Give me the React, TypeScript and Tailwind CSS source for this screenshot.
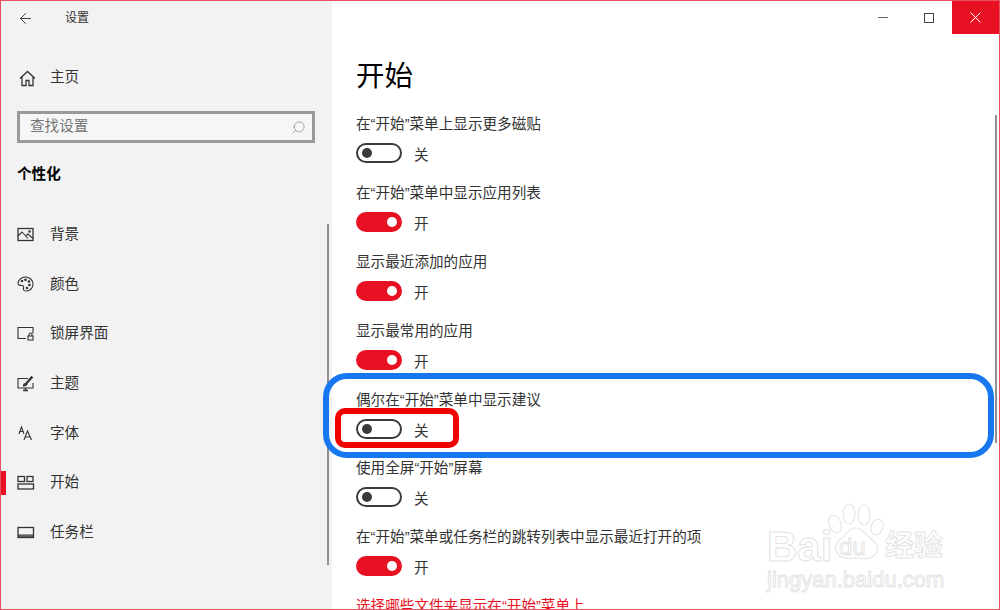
import React from "react";
import { ArrowLeft, Search } from "lucide-react";

const font = "font-['Liberation_Sans','Noto_Sans_CJK_SC',sans-serif]";

const navIcons: Record<string, React.ReactNode> = {
  背景: (
    <>
      <rect x="1" y="2.500" width="15" height="12" strokeWidth="1.300" />
      <path d="M1 10l4-4 6 6.500M9 9.500l2-1.500 5 4.500" />
      <circle cx="12.500" cy="5.500" r="0.800" />
    </>
  ),
  颜色: (
    <>
      <path d="M8.500 1C4.500 1 1 4 1 7.500c0 2 2.500 2 4 2 1.500 0 2 1 1.500 2.500-.5 2 .5 3 2.500 3 4 0 7-3 7-7S12.500 1 8.500 1z" />
      <circle cx="5" cy="5" r="0.800" fill="#333" />
      <circle cx="8.500" cy="3.800" r="0.800" fill="#333" />
      <circle cx="12" cy="5.500" r="0.800" fill="#333" />
      <circle cx="12.500" cy="9" r="0.800" fill="#333" />
      <circle cx="10" cy="12" r="0.800" fill="#333" />
    </>
  ),
  锁屏界面: (
    <>
      <path d="M9 13.500H1V2.500h15v6" />
      <rect x="11" y="11" width="5" height="4" />
      <path d="M12 11V9.500a1.500 1.500 0 0 1 3 0V11" />
    </>
  ),
  主题: (
    <>
      <path d="M11 3.500H1v9.500h15V8" />
      <path d="M6 15.500h5M8.500 13v2.500" strokeWidth="1.500" />
      <path d="M6.500 11c0-2 1-2.500 2-2.500L14.500 1.500l1 1-5.500 6c0 1.500-1 2.500-3.500 2.500z" fill="#333" />
    </>
  ),
  字体: (
    <>
      <path d="M2 9l2.500-7L7 9M3 6.500h3" />
      <path d="M7 15l3.500-9L14.500 15M8.300 12h4.500" />
    </>
  ),
  开始: (
    <>
      <rect x="1" y="2.500" width="6.500" height="5" strokeWidth="1.300" />
      <rect x="10" y="2.500" width="6" height="5" strokeWidth="1.300" />
      <rect x="1" y="10" width="15.500" height="5" strokeWidth="1.300" />
    </>
  ),
  任务栏: (
    <>
      <rect x="1" y="3.500" width="15.500" height="10" strokeWidth="1.300" />
      <path d="M1 11h15.500M1 12.300h15.500" />
    </>
  ),
};

const navItems = ["背景", "颜色", "锁屏界面", "主题", "字体", "开始", "任务栏"];

const settings = [
  { label: "在“开始”菜单上显示更多磁贴", on: false },
  { label: "在“开始”菜单中显示应用列表", on: true },
  { label: "显示最近添加的应用", on: true },
  { label: "显示最常用的应用", on: true },
  { label: "偶尔在“开始”菜单中显示建议", on: false },
  { label: "使用全屏“开始”屏幕", on: false },
  { label: "在“开始”菜单或任务栏的跳转列表中显示最近打开的项", on: true },
];

function Toggle({ on }: { on: boolean }) {
  return (
    <div className="flex items-center h-[20px] mt-[8px]">
      <div
        className={`w-[46px] h-[20px] rounded-full flex items-center ${
          on
            ? "bg-[#e81123] justify-end pr-[5px]"
            : "border-2 border-[#3a3a3a] pl-[4px]"
        }`}
      >
        <div className={`w-[10px] h-[10px] rounded-full ${on ? "bg-white" : "bg-[#3a3a3a]"}`}></div>
      </div>
      <span className="ml-[12px] text-[14.600px] leading-[20px] text-[#333] mt-[4px]">{on ? "开" : "关"}</span>
    </div>
  );
}

function BaiduMark() {
  const outline = "text-white [-webkit-text-stroke:1px_#e4e4e4] whitespace-nowrap";
  return (
    <div className="absolute left-[766px] top-[502px] w-[180px] h-[90px] pointer-events-none">
      <svg className="absolute left-[60px] top-0" width="60" height="60" viewBox="0 0 60 60" fill="#fff" stroke="#e6e6e6" strokeWidth="1.200">
        <ellipse cx="8" cy="21" rx="6" ry="9" transform="rotate(-20 8 21)" />
        <ellipse cx="22" cy="11" rx="6" ry="10" />
        <ellipse cx="37" cy="12" rx="6" ry="10" />
        <ellipse cx="50" cy="24" rx="6" ry="8" transform="rotate(20 50 24)" />
        <path d="M28 25c-6 0-8 6-13 10-6 4-7 8-6 12 2 8 9 9 19 8 8 1 18 2 22-6 2-6-1-9-6-13-5-4-8-11-16-11z" />
      </svg>
      <span className={`absolute left-0 top-[22px] text-[42px] leading-[44px] font-bold font-['Liberation_Sans',sans-serif] ${outline}`}>Bai</span>
      <span className={`absolute left-[72px] top-[31px] text-[24px] leading-[26px] font-['Liberation_Sans',sans-serif] ${outline}`}>du</span>
      <span className={`absolute left-[118px] top-[26px] text-[29px] leading-[34px] font-bold ${outline}`}>经验</span>
      <span className={`absolute left-0 top-[64px] text-[22px] leading-[26px] font-['Liberation_Sans',sans-serif] ${outline}`}>jingyan.baidu.com</span>
    </div>
  );
}

export default function App() {
  return (
    <div className={`relative w-[1000px] h-[610px] overflow-hidden bg-white border border-[#e8505f] flex ${font}`}>
      {/* 侧边栏 */}
      <aside className="relative w-[331px] h-full shrink-0 bg-[#f2f2f2] flex flex-col">
        <div className="flex items-center h-[34px] pl-[16px]">
          <ArrowLeft size={17} strokeWidth={1.300} className="text-[#333]" />
          <span className="ml-[31px] text-[12px] text-[#333]">设置</span>
        </div>

        <div className="flex items-center h-[32px] mt-[27px] pl-[18px]">
          <svg width="17" height="17" viewBox="0 0 17 17" fill="none" stroke="#333" strokeWidth="1.300">
            <path d="M1 8.500L8.500 1.500 16 8.500M3 7v8.500h4v-5h3v5h4V7" />
          </svg>
          <span className="ml-[14px] text-[14.600px] text-[#333]">主页</span>
        </div>

        <div className="flex items-center justify-between mt-[17px] mx-[16px] w-[298px] h-[32px] border-[3px] border-[#999] bg-[#f6f6f6] pl-[10px] pr-[6px]">
          <span className="text-[14.600px] text-[#777]">查找设置</span>
          <Search size={15} strokeWidth={1} className="text-[#777] -scale-x-100" />
        </div>

        <div className="mt-[20px] ml-[16px] h-[22px] leading-[22px] text-[14.600px] font-bold text-black">个性化</div>

        <nav className="mt-[25.400px] flex flex-col">
          {navItems.map((name) => (
            <div key={name} className="relative flex items-center h-[49.600px] pl-[16px]">
              {name === "开始" && <div className="absolute left-0 top-[13px] w-[5px] h-[24px] bg-[#e81123]"></div>}
              <svg width="18" height="18" viewBox="0 0 18 18" fill="none" stroke="#333" strokeWidth="1.100">
                {navIcons[name]}
              </svg>
              <span className="ml-[15px] text-[14.600px] text-[#333]">{name}</span>
            </div>
          ))}
        </nav>

        <div className="absolute left-[326px] top-[223px] w-[2px] h-[341px] bg-[#8f8f8f]"></div>
      </aside>

      {/* 内容区 */}
      <main className="flex-1 pl-[24px] pt-[55px] overflow-hidden">
        <h1 className="text-[28.500px] leading-[40px] text-black">开始</h1>
        <div className="mt-[18.400px] flex flex-col gap-[19.800px]">
          {settings.map((s) => (
            <div key={s.label}>
              <div className="text-[14.600px] leading-[21px] text-[#333]">{s.label}</div>
              <Toggle on={s.on} />
            </div>
          ))}
          <div className="text-[14.600px] leading-[21px] text-[#e81123] whitespace-nowrap">选择哪些文件夹显示在“开始”菜单上</div>
        </div>
      </main>

      {/* 内容区滚动条 */}
      <div className="absolute left-[994px] top-[114px] w-[2px] h-[328px] bg-[#8f8f8f]"></div>

      {/* 窗口按钮 */}
      <div className="absolute right-0 top-0 flex items-center h-[33px]">
        <div className="w-[46px] flex justify-center">
          <div className="w-[10px] h-[1px] bg-[#666]"></div>
        </div>
        <div className="w-[46px] flex justify-center">
          <div className="w-[10px] h-[10px] border border-[#444]"></div>
        </div>
        <div className="w-[47px] h-[33px] bg-[#e81123] flex items-center justify-center">
          <svg width="11" height="11" viewBox="0 0 11 11" stroke="#fff" strokeWidth="1">
            <path d="M0.500 0.500l10 10M10.500 0.500l-10 10" />
          </svg>
        </div>
      </div>

      {/* 标注框 */}
      <div className="absolute left-[322px] top-[372px] w-[671px] h-[85px] rounded-[24px] border-[6px] border-[#1677f0]"></div>
      <div className="absolute left-[334px] top-[407px] w-[124px] h-[40px] rounded-[10px] border-[6px] border-[#f00000]"></div>

      <BaiduMark />
    </div>
  );
}
